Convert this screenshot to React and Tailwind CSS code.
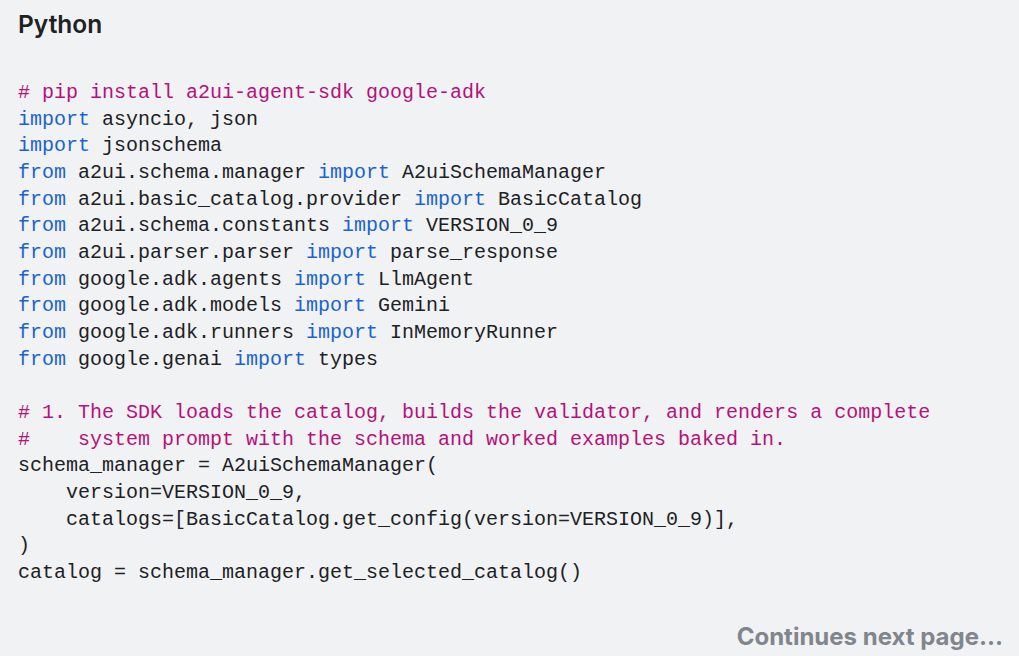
import React from "react";

const C = ({ children }) => <span className="text-[#b5127a]">{children}</span>;
const K = ({ children }) => <span className="text-[#1a63cf]">{children}</span>;

const lines = [
  [<C key="a"># pip install a2ui-agent-sdk google-adk</C>],
  [<K key="a">import</K>, " asyncio, json"],
  [<K key="a">import</K>, " jsonschema"],
  [<K key="a">from</K>, " a2ui.schema.manager ", <K key="b">import</K>, " A2uiSchemaManager"],
  [<K key="a">from</K>, " a2ui.basic_catalog.provider ", <K key="b">import</K>, " BasicCatalog"],
  [<K key="a">from</K>, " a2ui.schema.constants ", <K key="b">import</K>, " VERSION_0_9"],
  [<K key="a">from</K>, " a2ui.parser.parser ", <K key="b">import</K>, " parse_response"],
  [<K key="a">from</K>, " google.adk.agents ", <K key="b">import</K>, " LlmAgent"],
  [<K key="a">from</K>, " google.adk.models ", <K key="b">import</K>, " Gemini"],
  [<K key="a">from</K>, " google.adk.runners ", <K key="b">import</K>, " InMemoryRunner"],
  [<K key="a">from</K>, " google.genai ", <K key="b">import</K>, " types"],
  [""],
  [<C key="a"># 1. The SDK loads the catalog, builds the validator, and renders a complete</C>],
  [<C key="a">#    system prompt with the schema and worked examples baked in.</C>],
  ["schema_manager = A2uiSchemaManager("],
  ["    version=VERSION_0_9,"],
  ["    catalogs=[BasicCatalog.get_config(version=VERSION_0_9)],"],
  [")"],
  ["catalog = schema_manager.get_selected_catalog()"],
];

export default function App() {
  return (
    <div className="w-[1019px] h-[656px] bg-[#f1f2f4] flex flex-col overflow-hidden">
      <div className="pl-[18px] pt-[9px] h-[30px] box-content leading-[30px] text-[24.5px] font-semibold text-[#202124] font-['Inter',sans-serif]">
        Python
      </div>
      <pre className="mt-[41px] pl-[18px] font-['Liberation_Mono',monospace] text-[20px] leading-[26.67px] text-[#202124] whitespace-pre">
        {lines.map((l, i) => (
          <div key={i} className="h-[26.67px]">{l}</div>
        ))}
      </pre>
      <div className="mt-auto pr-[16px] pb-[4px] flex justify-end">
        <span className="text-[24px] leading-[30px] font-bold text-[#80868b] font-['Inter',sans-serif]">
          Continues next page...
        </span>
      </div>
    </div>
  );
}
